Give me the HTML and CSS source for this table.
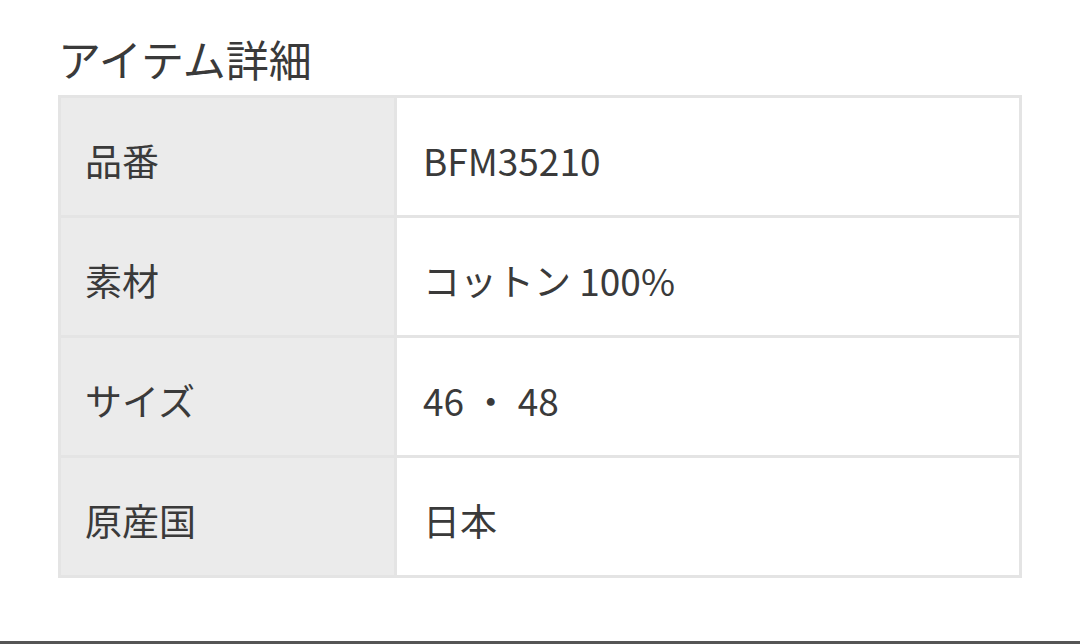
FILE: index.html
```html
<!DOCTYPE html>
<html lang="ja">
<head>
<meta charset="utf-8">
<link rel="stylesheet" href="styles.css">
</head>
<body>
<div class="page">
  <main class="content">
    <h2 class="title">アイテム詳細</h2>
    <table class="spec">
      <tr><th>品番</th><td>BFM35210</td></tr>
      <tr><th>素材</th><td>コットン 100%</td></tr>
      <tr><th>サイズ</th><td>46 ・ 48</td></tr>
      <tr><th>原産国</th><td>日本</td></tr>
    </table>
  </main>
  <div class="bottom-bar"></div>
</div>
</body>
</html>
```
FILE: styles.css
```css
html, body {
  margin: 0;
  padding: 0;
  background: #fff;
}
.page {
  min-height: 100vh;
  display: flex;
  flex-direction: column;
  font-family: "Noto Sans CJK JP", "Noto Sans", sans-serif;
  color: #3a3a3a;
}
.content {
  padding: 0 58px 0 58px;
}
.title {
  margin: 0;
  padding-top: 30px;
  font-size: 43px;
  font-weight: 400;
  line-height: 56px;
  color: #3a3a3a;
  margin-bottom: 9px;
}
.spec {
  border-collapse: collapse;
  width: 964px;
  border: 3px solid #e4e4e4;
}
.spec th, .spec td {
  border: 3px solid #e4e4e4;
  height: 111px;
  padding: 6px 0 0 0;
  font-size: 37px;
  font-weight: 400;
  text-align: left;
  vertical-align: middle;
  line-height: 40px;
  box-sizing: content-box;
}
.spec th {
  width: 309px;
  background: #ebebeb;
  padding-left: 24px;
  color: #3a3a3a;
}
.spec td {
  padding-left: 26px;
  background: #fff;
}
.bottom-bar {
  margin-top: auto;
  height: 3px;
  background: #555;
}
```
